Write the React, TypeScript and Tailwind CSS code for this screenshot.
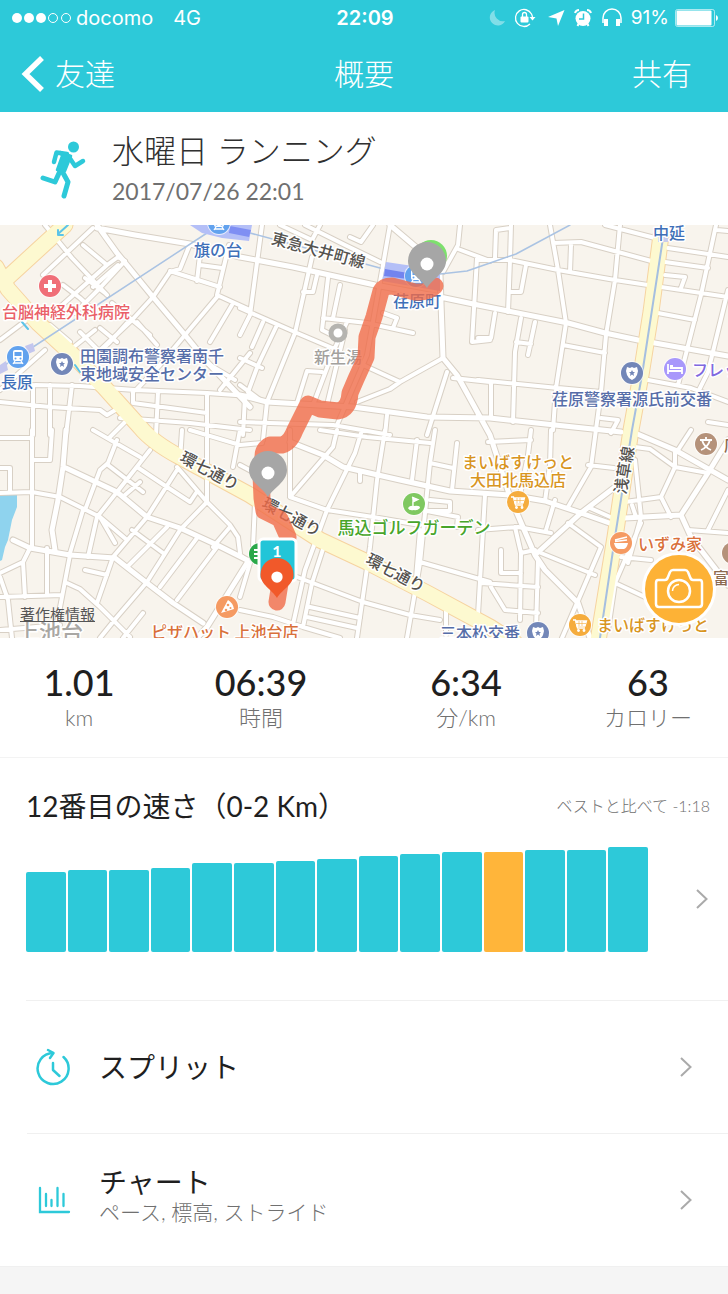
import * as React from 'react';

const sans = 'font-[Lato,"Noto_Sans_CJK_JP",sans-serif]';
const jp = 'font-["Noto_Sans_CJK_JP",sans-serif]';

/* ---------------------------------- map data --------------------------------- */

const mainStreets = [
  'M97 0L117 28L153 72L185 110L207 137L250 182',
  'M97 3L135 10L190 19L240 32L293 42L375 60L440 72L478 80L568 98L605 108L638 115L728 131',
  'M390 0L417 23L440 50L443 133L457 150L490 210L510 272L535 330L545 345L578 378L590 413',
  'M66 243L117 267L147 292L180 303L217 320L247 335',
  'M13 315L30 323L70 330L115 333L143 355L173 378L203 398',
  'M240 170L267 177L353 182L427 192L490 193L555 200L621 207',
  'M615 262L581 288L535 330',
  'M635 208L675 225L728 255',
  'M625 293L681 290L708 248L728 215',
  'M66 205L63 242L58 275L52 305L55 325',
  'M681 290L691 312L711 338L728 360',
  'M247 338L207 402L197 413',
  'M290 217L323 230L343 242L400 255L450 266L510 270L545 276L581 288L615 300',
];

const streets = [
  'M45 0L72 33L107 70', 'M93 3L43 50', 'M83 20L107 40L118 32L125 36L100 63L75 88', 'M118 40L93 62',
  'M63 60L80 73L92 84', 'M85 53L105 68', 'M107 40L60 82', 'M190 19L180 44L170 47L153 72L132 95L95 130',
  'M170 46L220 62', 'M200 30L197 56', 'M200 40L222 43', 'M229 20L217 70L250 85', 'M217 72L185 110L160 140L137 164',
  'M232 80L210 117', 'M0 115L20 100L40 85', 'M50 100L70 117L67 122', 'M80 107L100 127', 'M100 103L117 117',
  'M127 98L110 117L85 140', 'M137 97L157 120', 'M70 125L95 105', 'M112 78L132 95L150 110',
  'M35 160L80 161L135 165L207 168L250 171', 'M0 177L50 182L100 185L107 190L117 184', 'M33 160V210', 'M50 160V210',
  'M72 160L66 210', 'M133 165V178L207 188', 'M158 167L156 210', 'M207 168V225', 'M120 193L190 198L250 205',
  'M127 195L110 212', 'M245 172L243 210', 'M0 165L45 125', 'M220 165L250 128', 'M205 137L235 155',
  'M32 205V322', 'M52 205L50 235H32', 'M0 213H32', 'M0 243H10V267', 'M0 268L32 267L60 272L100 292L127 315',
  'M93 205L140 232', 'M117 215L108 238L100 245L85 285', 'M108 240L143 267', 'M150 225L117 267L97 292L88 332',
  'M137 242L167 262L190 277L196 268', 'M177 242L207 277L230 300L238 312L240 328',
  'M207 255V277L180 305L147 357L117 392L100 413', 'M177 245L147 292L113 332L97 378', 'M30 323L23 337L0 348',
  'M23 337L25 372', 'M47 323V370', 'M70 330L62 372L57 398L53 413', 'M0 372L62 370', 'M67 358L80 364L100 382L130 412',
  'M85 345L107 350', 'M197 313L160 362', 'M217 322L177 375', 'M230 302L213 322', 'M167 302L127 342', 'M132 305L163 328',
  'M83 285L70 328', 'M143 388L123 413', 'M0 352L8 375L12 413', 'M182 205L180 235', 'M207 225V245', 'M240 205L233 242',
  'M115 318L100 292', 'M125 270L140 257', 'M0 405L60 400', 'M190 205L240 220L262 218',
  'M262 0L250 90L240 110', 'M240 83L297 108L337 125', 'M312 32L295 108L267 177L263 215', 'M305 0L345 20L380 37',
  'M373 0L361 17L350 12', 'M280 0L312 15L320 0', 'M460 0L458 20L443 47', 'M458 24L490 36', 'M390 0L380 57L367 130L337 200',
  'M317 50L313 67H303', 'M328 53L322 105L330 109', 'M340 60L333 93', 'M323 93L367 98L413 108', 'M383 88L397 93L393 103',
  'M347 97L333 127L313 180', 'M322 147L307 146L297 178', 'M363 140L400 157L443 133', 'M400 157L390 164L357 177',
  'M447 147L427 210', 'M453 153L490 157', 'M387 190L385 210', 'M477 33L472 117L490 115', 'M277 100L258 140L248 167',
  'M263 97L252 122', 'M240 133L262 143', 'M240 197L333 200L390 210', 'M345 105L327 180', 'M240 160L260 175',
  'M511 0L510 35L508 87', 'M478 35H510L558 45L615 55L648 60', 'M661 62L728 72', 'M495 33L496 5L510 3',
  'M550 0L558 45L566 98L556 163L553 205', 'M553 18L581 17L618 27L655 37', 'M571 20L570 47',
  'M620 0L615 55L606 110L601 167L591 242L568 282', 'M605 0L655 13', 'M668 23L728 32', 'M665 37L708 43',
  'M716 0L701 70L678 160', 'M728 65L708 147L698 167', 'M665 50L685 52L681 63', 'M658 88L695 95', 'M526 40L521 67H511',
  'M478 113H491L495 88', 'M521 93L515 127L513 197', 'M535 97L528 130', 'M516 117L531 119', 'M563 120L605 128',
  'M478 155L558 163L601 167', 'M491 158V193', 'M648 155L691 163L728 177', 'M601 193L618 195L611 208',
  'M708 197L728 200', 'M717 5L728 6',
  'M337 205L333 222L290 272', 'M362 205L355 228L327 285L305 345L290 413', 'M385 205L377 255L370 322L357 413',
  'M320 205L367 212L430 218', 'M435 205L430 238L420 338L407 413', 'M417 215L412 255', 'M457 218L452 265',
  'M430 238L453 243', 'M360 246V256', 'M290 205L290 272L327 285L373 292L420 300', 'M430 275L450 277V286H427',
  'M427 286L458 292L457 302', 'M255 278L253 322', 'M325 318L312 358L303 402', 'M297 352L363 377L410 390L440 395',
  'M310 382L360 393', 'M307 392L357 403', 'M420 337L490 357', 'M240 385L273 392L303 402L340 413', 'M485 270L478 390',
  'M446 385V410', 'M240 330L250 338L240 372', 'M240 240L255 248', 'M420 305L415 365',
  'M478 305L518 302L551 308', 'M538 335L536 405', 'M515 302L521 328L520 395', 'M501 325V348H521', 'M481 358L538 362',
  'M491 362L505 385L538 388', 'M541 328L595 350', 'M615 358L645 372', 'M568 298L601 322L562 413', 'M531 205L528 230L520 270',
  'M488 217L531 215', 'M551 205L550 240L545 276', 'M588 240L614 243', 'M635 222L650 224L675 242L708 248',
  'M635 235L641 292L628 338', 'M675 225L675 242L661 272L671 292', 'M625 277L661 272', 'M688 305L728 308',
  'M728 265L708 305', 'M641 298L615 358L608 405', 'M621 332L651 335', 'M691 205L678 225', 'M590 283L617 295',
  'M632 280L636 292', 'M555 275L546 305', 'M521 328L535 325',
];

const avenues = [
  'M65 0L5 55',
  'M-4 42L8 64L38 98L75 132L104 162L140 202Q152 217 180 232L250 270L320 315L367 337L427 368L490 402L515 418',
  'M661 10L651 87L641 150L631 205L615 312L598 416',
];

const route =
  'M435 61Q428 68 415 67L392 61Q384 61 381 66L374 92L367 112L366 132L356 154L350 168Q349 184 338 186L320 184L308 179L295 205Q290 218 282 220L270 220Q262 224 263 235L261 250L262 273L264 286L280 294L288 312L283 340L277 377';

type Tone = 'rail' | 'police' | 'clinic' | 'shop' | 'food' | 'golf' | 'hotel' | 'grey' | 'road' | 'brown';

const toneFill: Record<Tone, string> = {
  rail: 'fill-[#3f70b8]',
  police: 'fill-[#566da8]',
  clinic: 'fill-[#ea5f68]',
  shop: 'fill-[#d8951f]',
  food: 'fill-[#d9703a]',
  golf: 'fill-[#48a52b]',
  hotel: 'fill-[#8069e0]',
  grey: 'fill-[#a3a19d]',
  road: 'fill-[#55534f]',
  brown: 'fill-[#8d6a4f]',
};

interface PlaceLabel {
  text: string;
  x: number;
  y: number;
  tone: Tone;
  rotate?: number;
  start?: boolean;
  large?: boolean;
}

const placeLabels: PlaceLabel[] = [
  { text: '旗の台', x: 218, y: 31, tone: 'rail' },
  { text: '台脳神経外科病院', x: 2, y: 93, tone: 'clinic', start: true },
  { text: '長原', x: 1, y: 163, tone: 'rail', start: true },
  { text: '田園調布警察署南千', x: 80, y: 137, tone: 'police', start: true },
  { text: '束地域安全センター', x: 80, y: 155, tone: 'police', start: true },
  { text: '東急大井町線', x: 317, y: 31, tone: 'road', rotate: 15 },
  { text: '荏原町', x: 417, y: 82, tone: 'rail' },
  { text: '新生湯', x: 338, y: 138, tone: 'grey' },
  { text: '中延', x: 669, y: 14, tone: 'rail' },
  { text: 'フレッ', x: 692, y: 151, tone: 'hotel', start: true },
  { text: '荏原警察署源氏前交番', x: 632, y: 180, tone: 'police' },
  { text: '環七通り', x: 207, y: 251, tone: 'road', rotate: 28 },
  { text: '環七通り', x: 289, y: 297, tone: 'road', rotate: 28 },
  { text: '環七通り', x: 393, y: 353, tone: 'road', rotate: 28 },
  { text: '浅草線', x: 630, y: 246, tone: 'road', rotate: -80 },
  { text: 'まいばすけっと', x: 518, y: 243, tone: 'shop' },
  { text: '大田北馬込店', x: 518, y: 261, tone: 'shop' },
  { text: '馬込ゴルフガーデン', x: 414, y: 309, tone: 'golf', large: true },
  { text: 'いずみ家', x: 638, y: 325, tone: 'food', start: true },
  { text: '富士', x: 713, y: 359, tone: 'brown', start: true },
  { text: '店', x: 724, y: 226, tone: 'brown', start: true },
  { text: 'まいばすけっと', x: 597, y: 406, tone: 'shop', start: true },
  { text: '三本松交番', x: 440, y: 414, tone: 'police', start: true },
  { text: 'ピザハット 上池台店', x: 151, y: 413, tone: 'food', start: true },
];

/* --------------------------------- map pieces -------------------------------- */

function Pin({ x, y, scale = 1, className }: { x: number; y: number; scale?: number; className: string }) {
  return (
    <g transform={`translate(${x} ${y}) scale(${scale})`}>
      <path d="M0 0C-5 -9 -19 -15 -19 -27A19 19 0 0 1 19 -27C19 -15 5 -9 0 0Z" className={className} />
      <circle cy="-24" r="6.5" fill="#fff" />
    </g>
  );
}

function Poi({ x, y, className, children }: { x: number; y: number; className: string; children?: React.ReactNode }) {
  return (
    <g transform={`translate(${x} ${y})`}>
      <circle r="12" fill="#fff" opacity="0.7" />
      <circle r="11" className={className} />
      {children}
    </g>
  );
}

function CartGlyph() {
  return (
    <g fill="none" stroke="#fff" strokeWidth="1.3">
      <path d="M-7 -5H-4.500L-2.500 3H5" />
      <path d="M-4 -4H6.500L5 1H-3Z" fill="#fff" />
      <path d="M-4 -1.500H6M-1 -4V1M2 -4V1" stroke="#f5ac3d" strokeWidth="0.6" />
      <circle cx="-1.500" cy="5.500" r="0.8" fill="#fff" />
      <circle cx="4" cy="5.500" r="0.8" fill="#fff" />
    </g>
  );
}

function BadgeGlyph() {
  return (
    <g>
      <path d="M-5 -6L-2 -5L0 -6L2 -5L5 -6L6 -2L5 2Q4 5 0 7Q-4 5 -5 2L-6 -2Z" fill="#fff" />
      <path d="M0 -3L1 -1H3L1.500 0.500L2 3L0 1.500L-2 3L-1.500 0.500L-3 -1H-1Z" fill="#7387b8" />
    </g>
  );
}

function TrainGlyph() {
  return (
    <g>
      <rect x="-5" y="-7" width="10" height="11" rx="2" fill="#fff" />
      <rect x="-3.500" y="-5" width="7" height="4" fill="#62a2ee" />
      <circle cx="-2.500" cy="1.500" r="1" fill="#62a2ee" />
      <circle cx="2.500" cy="1.500" r="1" fill="#62a2ee" />
      <path d="M-3 4L-5 7M3 4L5 7M-4 6H4" stroke="#fff" strokeWidth="1.3" />
    </g>
  );
}

function RouteMap() {
  return (
    <svg viewBox="0 0 728 413" className="block h-auto w-full bg-[#f8f4ed]" role="img" aria-label="ランニングコース">
      <path d="M0 270H17L17 282L12 295L8 315L5 322L2 335L0 336Z" fill="#8fd3ee" />
      <g fill="none" strokeLinecap="round" strokeLinejoin="round">
        <path d={mainStreets.join('')} stroke="#d8d0c5" strokeWidth="7" />
        <path d={streets.join('')} stroke="#d8d0c5" strokeWidth="6" />
        <path d={avenues.join('')} stroke="#f6d3a0" strokeWidth="17" />
        <path d={streets.join('')} stroke="#fff" strokeWidth="4" />
        <path d={mainStreets.join('')} stroke="#fff" strokeWidth="5" />
        <path d={avenues.join('')} stroke="#fdf9d0" strokeWidth="15" />
        <path d="M0 143L30 124L207 8M250 8L380 43M440 49L467 46L490 38L516 29L570 0" stroke="#aac3e3" strokeWidth="1.5" />
        <path d="M663 13L642 150L632 205L615 312L600 413" stroke="#a5bfe0" strokeWidth="2" />
        <path d="M68 0L58 9M58 5V10H63M22 97L28 104M75 140L80 147" stroke="#5cc4e8" strokeWidth="2" />
      </g>

      {/* station platforms */}
      <path d="M190 0H252L249 16L222 13L202 8Z" fill="#b4bff7" />
      <path d="M230 1L251 5L249 12L229 8Z" fill="#7f8ff3" />
      <path d="M386 37L440 45L440 66L382 56Z" fill="#b4bff7" />
      <path d="M385 44L408 48V54L384 51Z" fill="#7284ef" />
      <path d="M0 140L6 136L8 145L0 149ZM25 121L33 118L35 126L28 129Z" fill="#c3c6ee" />
      <path d="M658 8H668V17H658Z" fill="#c9cdec" />

      <Poi x={219} y={-2} className="fill-[#62a2ee]"><TrainGlyph /></Poi>
      <Poi x={18} y={132} className="fill-[#62a2ee]"><TrainGlyph /></Poi>
      <Poi x={416} y={51} className="fill-[#62a2ee]"><TrainGlyph /></Poi>
      <Poi x={50} y={61} className="fill-[#f06f78]">
        <path d="M-6 0H6M0 -6V6" stroke="#fff" strokeWidth="4" />
      </Poi>
      <Poi x={62} y={139} className="fill-[#7387b8]"><BadgeGlyph /></Poi>
      <Poi x={632} y={148} className="fill-[#7387b8]"><BadgeGlyph /></Poi>
      <Poi x={538} y={408} className="fill-[#7387b8]"><BadgeGlyph /></Poi>
      <Poi x={675} y={144} className="fill-[#a898fb]">
        <path d="M-7 -5V5M-7 2H7V5M-5 -1H7V2M-5 -3H-2" fill="none" stroke="#fff" strokeWidth="1.8" />
      </Poi>
      <circle cx="338" cy="108" r="7" fill="#fff" stroke="#b5b4b0" strokeWidth="5" />
      <Poi x={414} y={279} className="fill-[#7fc860]">
        <path d="M-2 -7L4 -4.500L-1 -2V3" fill="#fff" stroke="#fff" strokeWidth="1.300" />
        <path d="M-6 4Q-4 1 0 2Q6 1 6 4Q3 7 0 6Q-5 7 -6 4Z" fill="#fff" />
      </Poi>
      <Poi x={518} y={277} className="fill-[#f5ac3d]"><CartGlyph /></Poi>
      <Poi x={580} y={400} className="fill-[#f5ac3d]"><CartGlyph /></Poi>
      <Poi x={621} y={318} className="fill-[#f59a62]">
        <path d="M-7 0H7Q6 5 3 6H-3Q-6 5 -7 0Z" fill="#fff" />
        <path d="M-6 -3L6 -6M-6 -1.500L6 -3" stroke="#fff" strokeWidth="1.300" />
      </Poi>
      <Poi x={227} y={382} className="fill-[#f59a62]">
        <path d="M-6 6L1 -7Q6 -4 7 2Z" fill="#fff" />
        <circle cx="1" cy="-2" r="1.300" fill="#f59a62" />
        <circle cx="-1" cy="3" r="1.300" fill="#f59a62" />
        <circle cx="3.500" cy="1" r="1" fill="#f59a62" />
      </Poi>
      <Poi x={706} y={219} className="fill-[#b5927a]">
        <path d="M-6 -4H6M0 -7V-4M-4 -4Q-2 3 5 6M4 -4Q2 3 -5 6" fill="none" stroke="#fff" strokeWidth="1.800" />
      </Poi>
      <Poi x={733} y={328} className="fill-[#b5927a]" />
      <Poi x={260} y={329} className="fill-[#2aa84a]">
        <path d="M-6 -4H0M-6 0H0M-6 4H0" stroke="#fff" strokeWidth="2" />
      </Poi>

      <text x="17" y="415" className={`${jp} fill-[#a9a7a3] stroke-white stroke-[3px] text-[22px] font-medium [paint-order:stroke]`}>
        上池台
      </text>
      {placeLabels.map((label) => (
        <text
          key={`${label.text}-${label.x}`}
          x={label.x}
          y={label.y}
          textAnchor={label.start ? 'start' : 'middle'}
          transform={label.rotate ? `rotate(${label.rotate} ${label.x} ${label.y})` : undefined}
          className={`${jp} ${toneFill[label.tone]} ${label.large ? 'text-[17px]' : 'text-[16px]'} stroke-white stroke-[3px] font-medium [paint-order:stroke] [stroke-linejoin:round]`}
        >
          {label.text}
        </text>
      ))}

      <path d={route} fill="none" stroke="#f06c48" strokeOpacity="0.8" strokeWidth="17" strokeLinecap="round" strokeLinejoin="round" />

      <circle cx="431" cy="31" r="16" fill="#7de06d" />
      <Pin x={427} y={63} className="fill-[#a6a6a6]" />
      <Pin x={268} y={272} className="fill-[#a6a6a6]" />
      <rect x="259" y="314" width="37" height="42" rx="4" fill="#22c5d8" stroke="#fff" strokeWidth="3" />
      <text x="277" y="332" textAnchor="middle" className={`${sans} fill-white text-[16px] font-bold`}>1</text>
      <Pin x={277} y={373} scale={0.87} className="fill-[#f1592a]" />
    </svg>
  );
}

/* ----------------------------------- header ---------------------------------- */

function StatusBar() {
  return (
    <div className="grid h-9 grid-cols-[1fr_auto_1fr] items-center pr-2.5 pl-3 font-[Inter,sans-serif] text-xl leading-6">
      <div className="flex items-center">
        <svg width="60" height="12" viewBox="0 0 60 12" fill="#fff">
          <circle cx="5" cy="6" r="5" />
          <circle cx="17" cy="6" r="5" />
          <circle cx="29" cy="6" r="5" />
          <circle cx="41" cy="6" r="4.500" fill="none" stroke="#fff" />
          <circle cx="54" cy="6" r="4.500" fill="none" stroke="#fff" />
        </svg>
        <span className="ml-1">docomo</span>
        <span className="ml-5">4G</span>
      </div>
      <span className="font-semibold">22:09</span>
      <div className="flex items-center justify-end gap-2">
        <svg width="17" height="18" viewBox="0 0 17 18" className="opacity-40">
          <path d="M6 1A8 8 0 1 0 16 12A8.500 8.500 0 0 1 6 1Z" fill="#fff" />
        </svg>
        <svg width="22" height="20" viewBox="0 0 22 20" fill="none" stroke="#fff" strokeWidth="1.300">
          <path d="M17.500 6A8.500 8.500 0 1 0 16 16M17.500 6Q18.500 8 18.500 10" />
          <path d="M15.500 9H21.500L18.500 12.500Z" fill="#fff" stroke="none" />
          <rect x="6.500" y="8.500" width="8" height="6" rx="1" fill="#fff" stroke="none" />
          <path d="M8.500 9V6.500A2 2 0 0 1 12.500 6.500V9" />
        </svg>
        <svg width="17" height="16" viewBox="0 0 17 16" className="ml-1">
          <path d="M16.500 0L10 16L8.500 8.500L0 7Z" fill="#fff" />
        </svg>
        <svg width="20" height="20" viewBox="0 0 20 20">
          <circle cx="10" cy="10.500" r="7.500" fill="#fff" />
          <path d="M2 5Q3 2 6 2M14 2Q17 2 18 5M4.500 18L5.500 16M15.500 18L14.500 16" fill="none" stroke="#fff" strokeWidth="2" />
          <path d="M10.500 5.500V11H6" fill="none" stroke="#2dc9d9" strokeWidth="1.500" />
        </svg>
        <svg width="22" height="20" viewBox="0 0 22 20" fill="none" stroke="#fff">
          <path d="M2 15V10A9 9 0 0 1 20 10V15" strokeWidth="1.500" />
          <path d="M5 11V18M17 11V18" strokeWidth="4" />
        </svg>
        <span className="text-[19px]">91%</span>
        <svg width="43" height="18" viewBox="0 0 43 18" className="-ml-0.5">
          <rect x="0.500" y="0.500" width="39" height="17" rx="2" fill="none" stroke="#fff" strokeOpacity="0.6" />
          <rect x="1.500" y="1.500" width="35" height="15" rx="1" fill="#fff" />
          <path d="M41 6Q43 7 43 9T41 12Z" fill="#fff" />
        </svg>
      </div>
    </div>
  );
}

function NavBar() {
  return (
    <nav className={`${jp} grid h-19 grid-cols-[1fr_auto_1fr] items-center px-5 pb-1 text-3xl font-light`}>
      <button type="button" className="flex items-center gap-2.5 justify-self-start">
        <svg width="25" height="38" viewBox="0 0 25 38" fill="none" stroke="#fff" strokeWidth="5.500" className="translate-y-0.5">
          <path d="M22 3L5.500 19L22 35" />
        </svg>
        友達
      </button>
      <h1>概要</h1>
      <button type="button" className="justify-self-end px-4">共有</button>
    </nav>
  );
}

function RunnerIcon() {
  return (
    <svg width="48" height="60" viewBox="0 0 48 60" fill="none" stroke="#2dc9d9" strokeLinecap="round" strokeLinejoin="round">
      <circle cx="33.500" cy="8" r="5.500" fill="#2dc9d9" stroke="none" />
      <path d="M14 23L16.500 13.500L27 15" strokeWidth="4.500" />
      <path d="M29 18L35 27L43 22" strokeWidth="4.500" />
      <path d="M20 13L31 17L25 32L17 31L22 17Z" fill="#2dc9d9" strokeWidth="2.500" />
      <path d="M20 32L15 43L3 39" strokeWidth="5" />
      <path d="M22 32L28 43L24 57" strokeWidth="5" />
    </svg>
  );
}

/* ---------------------------------- sections --------------------------------- */

const stats = [
  { value: '1.01', unit: 'km' },
  { value: '06:39', unit: '時間' },
  { value: '6:34', unit: '分/km' },
  { value: '63', unit: 'カロリー' },
];

const bars = [80, 82, 82, 84, 89, 89, 91, 93, 96, 98, 100, 100, 102, 102, 105];
const currentBar = 11;

function Chevron() {
  return (
    <svg width="12" height="22" viewBox="0 0 12 22" fill="none" stroke="#aaa" strokeWidth="2" className="shrink-0">
      <path d="M1 2L10.500 11L1 20" />
    </svg>
  );
}

function StatsRow() {
  return (
    <dl className="grid h-30 grid-cols-[158fr_206fr_204fr_160fr] border-b border-[#f3f3f3] pt-6">
      {stats.map((stat) => (
        <div key={stat.unit} className="flex flex-col-reverse justify-end text-center">
          <dt className="text-[22px] leading-8 font-light text-[#707070]">{stat.unit}</dt>
          <dd className="text-4xl leading-10 font-medium text-[#1f1f1f]">{stat.value}</dd>
        </div>
      ))}
    </dl>
  );
}

function PaceRanking() {
  return (
    <section className="pl-[26px]">
      <div className="flex items-center justify-between pt-6 pr-[18px]">
        <h3 className="text-[28px] leading-12 text-[#1f1f1f]">12番目の速さ（0-2 Km）</h3>
        <span className="text-base font-light text-[#707070]">ベストと比べて -1:18</span>
      </div>
      <div className="flex items-center justify-between border-b border-[#f0f0f0] pt-4 pr-5 pb-12">
        <div className="mr-12 flex h-[106px] flex-1 items-end gap-0.5">
          {bars.map((height, i) => (
            <div
              key={i}
              className={`flex-1 rounded-[2px] ${i === currentBar ? 'bg-[#ffb53a]' : 'bg-[#2dc9d9]'}`}
              style={{ height }}
            />
          ))}
        </div>
        <Chevron />
      </div>
    </section>
  );
}

function MenuRow({ icon, title, subtitle }: { icon: React.ReactNode; title: string; subtitle?: string }) {
  return (
    <li className="ml-[27px] border-b border-[#f0f0f0] last:ml-0 last:pl-[27px]">
      <button type="button" className="flex h-33 w-full items-center pr-9 pl-2 text-left">
        <span className="w-16 shrink-0">{icon}</span>
        <span className={subtitle ? 'flex-1 pb-2' : 'flex-1'}>
          <span className="block text-[28px] leading-8 text-[#1f1f1f]">{title}</span>
          {subtitle && <span className="block text-[21px] leading-7 font-light text-[#707070]">{subtitle}</span>}
        </span>
        <Chevron />
      </button>
    </li>
  );
}

const splitIcon = (
  <svg width="36" height="38" viewBox="0 0 36 38" fill="none" stroke="#2dc9d9" strokeWidth="2.500" strokeLinecap="round" strokeLinejoin="round">
    <path d="M28.500 9A15.500 15.500 0 1 1 18 5" />
    <path d="M13 2L18.500 5L15 10M18 15V22L24.500 28" />
  </svg>
);

const chartIcon = (
  <svg width="36" height="30" viewBox="0 0 36 30" fill="none" stroke="#2dc9d9" strokeWidth="2.300" strokeLinecap="round">
    <path d="M5 3V27H34" />
    <path d="M11 9V21M16.500 15V21M22.500 3V21M28.500 9V21" />
  </svg>
);

export default function App() {
  return (
    <div lang="ja" className={`${sans} min-h-screen bg-[#f5f5f5]`}>
      <header className="bg-[#2dc9d9] text-white">
        <StatusBar />
        <NavBar />
      </header>

      <main className="bg-white">
        <div className="flex h-[113px] items-center gap-6 pl-10">
          <RunnerIcon />
          <div>
            <h2 className="mb-1 text-[32px] leading-10 font-light text-[#303030]">水曜日 ランニング</h2>
            <p className="text-[23px] leading-8 text-[#707070]">2017/07/26 22:01</p>
          </div>
        </div>

        <div className="relative">
          <RouteMap />
          <a href="#copyright" className={`${jp} absolute bottom-3 left-5 text-[15px] leading-6 text-[#555] underline`}>
            著作権情報
          </a>
          <button
            type="button"
            aria-label="写真を撮る"
            className="absolute right-3 bottom-3 flex size-[74px] items-center justify-center rounded-full border-[3px] border-white bg-[#fdb236]"
          >
            <svg width="50" height="44" viewBox="0 0 50 44" fill="none" stroke="#fff" strokeWidth="2.500" strokeLinejoin="round">
              <path d="M4 13H11Q13 13 14 10L16 5Q17 3 19 3H31Q33 3 34 5L36 10Q37 13 39 13H46Q48 13 48 16V37Q48 40 45 40H5Q2 40 2 37V16Q2 13 4 13Z" />
              <circle cx="25" cy="24" r="11" />
              <path d="M18.500 24A6.500 6.500 0 0 1 25 17.500" strokeWidth="1.500" />
            </svg>
          </button>
        </div>

        <StatsRow />
        <PaceRanking />
        <ul>
          <MenuRow icon={splitIcon} title="スプリット" />
          <MenuRow icon={chartIcon} title="チャート" subtitle="ペース, 標高, ストライド" />
        </ul>
      </main>
    </div>
  );
}
